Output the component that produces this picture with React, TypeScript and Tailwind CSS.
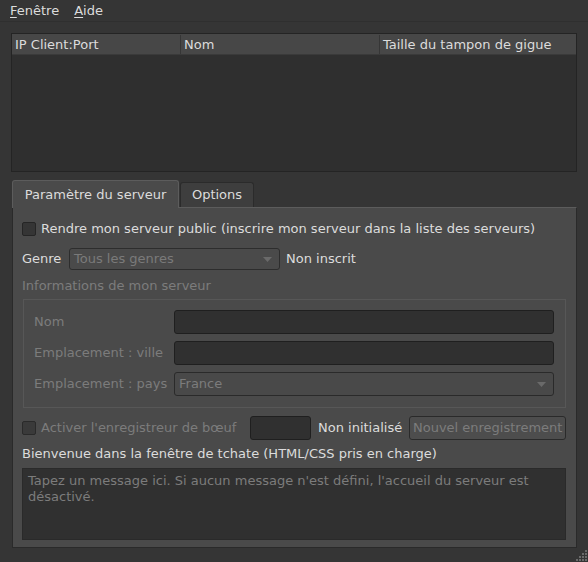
import React from 'react';

const font = { fontFamily: '"DejaVu Sans", sans-serif' };

function Checkbox({ disabled }: { disabled?: boolean }) {
  return (
    <div
      className={`w-[14px] h-[14px] shrink-0 rounded-[2px] border ${
        disabled ? 'border-[#2a2a2a] bg-[#3a3a3a]' : 'border-[#252525] bg-[#353535]'
      }`}
    />
  );
}

function Arrow() {
  return (
    <svg width="9" height="5" viewBox="0 0 9 5">
      <path d="M0 0 L9 0 L4.5 5 Z" fill="#6a6a6a" />
    </svg>
  );
}

export default function App() {
  return (
    <div className="w-[588px] h-[562px] bg-[#353535] text-[13px] text-[#dcdcdc] relative overflow-hidden whitespace-nowrap" style={font}>
      {/* menu bar */}
      <div className="h-[22px] flex items-center gap-[15px] pl-[10px] border-b border-[#2f2f2f]">
        <span><span className="underline underline-offset-2">F</span>enêtre</span>
        <span><span className="underline underline-offset-2">A</span>ide</span>
      </div>

      {/* client table */}
      <div className="ml-[11px] mt-[11px] w-[566px] h-[139px] border border-[#242424] bg-[#2f2f2f]">
        <div className="flex h-[21px] pt-[1px] bg-[#474747] border-b border-[#3a3a3a]">
          <div className="w-[169px] pl-[3px] flex items-center border-r border-[#363636]">IP Client:Port</div>
          <div className="w-[199px] pl-[3px] flex items-center border-r border-[#363636]">Nom</div>
          <div className="flex-1 pl-[3px] flex items-center">Taille du tampon de gigue</div>
        </div>
      </div>

      {/* tabs */}
      <div className="ml-[12px] mt-[8px] w-[565px]">
        <div className="flex items-end h-[27px]">
          <div className="h-[28px] w-[167px] rounded-t-[3px] border border-b-0 border-[#5c5c5c] bg-[#4a4a4a] flex items-center justify-center relative z-10 mb-[-1px]">
            Paramètre du serveur
          </div>
          <div className="h-[25px] w-[74px] ml-[1px] rounded-t-[3px] border border-b-0 border-[#2b2b2b] bg-[#3e3e3e] flex items-center justify-center">
            Options
          </div>
        </div>
        <div className="h-[341px] border border-[#2a2a2a] border-t-[#5c5c5c] bg-[#4a4a4a] pl-[9px] pr-[10px] pt-[12px]">
          <div className="flex items-center gap-[5px] h-[18px]">
            <Checkbox />
            <span>Rendre mon serveur public (inscrire mon serveur dans la liste des serveurs)</span>
          </div>

          <div className="flex items-center mt-[10px] h-[22px]">
            <span className="w-[47px]">Genre</span>
            <div className="w-[211px] h-[22px] rounded-[3px] border border-[#2d2d2d] bg-[#4a4a4a] flex items-center justify-between px-[4px] text-[#7a7a7a]">
              <span>Tous les genres</span>
              <span className="mr-[3px]"><Arrow /></span>
            </div>
            <span className="ml-[6px]">Non inscrit</span>
          </div>

          <div className="mt-[7px] text-[#7c7c7c] h-[17px] leading-[17px]">Informations de mon serveur</div>

          <div className="mt-[5px] ml-[1px] w-[543px] h-[109px] border border-[#575757] pl-[10px] pr-[11px] pt-[10px] flex flex-col gap-[7px] text-[#7c7c7c]">
            <div className="flex items-center h-[24px]">
              <span className="w-[140px]">Nom</span>
              <div className="flex-1 h-[24px] rounded-[3px] border border-[#1f1f1f] bg-[#303030]" />
            </div>
            <div className="flex items-center h-[24px]">
              <span className="w-[140px]">Emplacement : ville</span>
              <div className="flex-1 h-[24px] rounded-[3px] border border-[#1f1f1f] bg-[#303030]" />
            </div>
            <div className="flex items-center h-[24px]">
              <span className="w-[140px]">Emplacement : pays</span>
              <div className="flex-1 h-[24px] rounded-[3px] border border-[#2a2a2a] bg-[#494949] flex items-center justify-between px-[4px]">
                <span>France</span>
                <span className="mr-[3px]"><Arrow /></span>
              </div>
            </div>
          </div>

          <div className="flex items-center mt-[8px] h-[24px]">
            <Checkbox disabled />
            <span className="ml-[5px] w-[209px] shrink-0 text-[#7c7c7c]">Activer l'enregistreur de bœuf</span>
            <div className="w-[61px] h-[24px] shrink-0 rounded-[3px] border border-[#1f1f1f] bg-[#303030]" />
            <span className="ml-[7px] shrink-0">Non initialisé</span>
            <div className="ml-[7px] w-[157px] h-[24px] shrink-0 rounded-[3px] border border-[#2a2a2a] bg-[#4d4d4d] flex items-center justify-center text-[#7c7c7c]">
              Nouvel enregistrement
            </div>
          </div>

          <div className="mt-[5px] h-[18px] leading-[18px]">Bienvenue dans la fenêtre de tchate (HTML/CSS pris en charge)</div>

          <div className="mt-[5px] w-[544px] h-[72px] border border-[#2a2a2a] bg-[#303030] px-[5px] pt-[4px] text-[#7c7c7c] leading-[16px] whitespace-normal">
            Tapez un message ici. Si aucun message n'est défini, l'accueil du serveur est désactivé.
          </div>
        </div>
      </div>

      {/* size grip */}
      <svg className="absolute right-[1px] bottom-[1px]" width="11" height="11" viewBox="0 0 11 11">
        {[[9, 1], [9, 4], [6, 4], [9, 7], [6, 7], [3, 7], [9, 10], [6, 10], [3, 10], [0, 10]].map(([x, y], i) => (
          <rect key={i} x={x} y={y - 1} width="2" height="2" fill="#6a6a6a" />
        ))}
      </svg>
    </div>
  );
}
